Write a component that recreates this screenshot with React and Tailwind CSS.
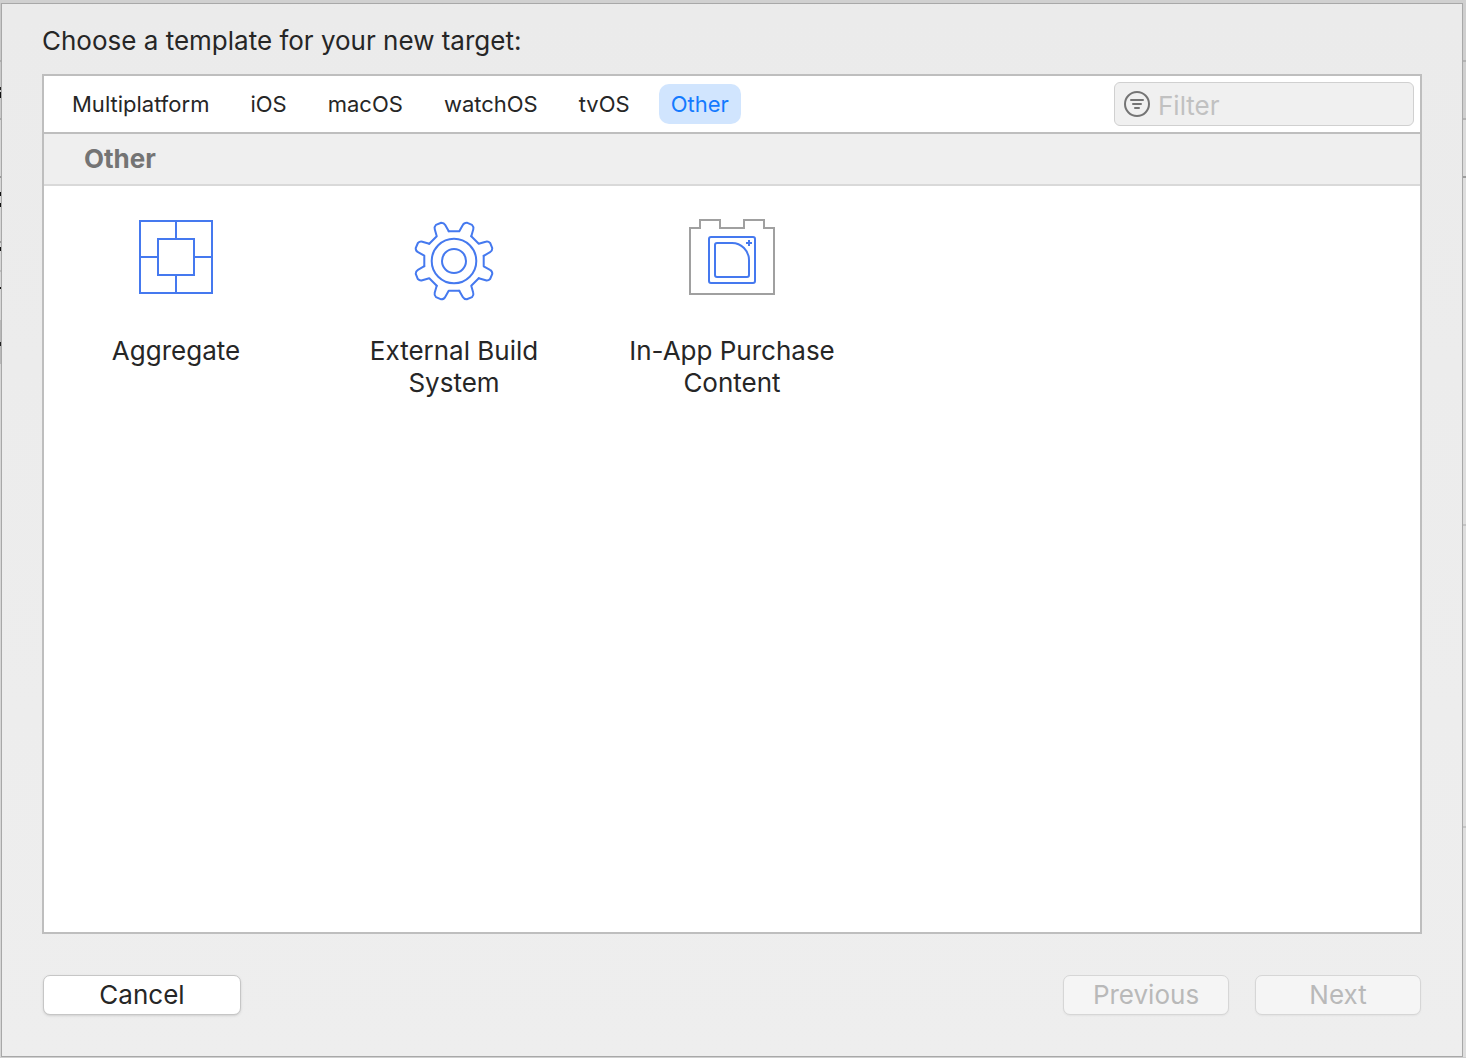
import React from "react";

const gearSegment =
  "M-5.3 -29.7H5.3L8.8 -36Q10 -38.3 12.8 -38.3L18 -36.1Q20 -34.1 19.3 -31.7L17.3 -24.7";

function AggregateIcon() {
  return (
    <svg width="88" height="88" viewBox="0 0 88 88" fill="none" stroke="#4579ef" strokeWidth="2" aria-hidden="true">
      <path d="M8 8H80V80H8ZM26 26H62V62H26ZM44 8V26M44 62V80M8 44H26M62 44H80" />
    </svg>
  );
}

function GearIcon() {
  return (
    <svg width="88" height="88" viewBox="0 0 88 88" fill="none" stroke="#4579ef" strokeWidth="2" aria-hidden="true">
      <g transform="translate(44 48)" strokeLinecap="round" strokeLinejoin="round">
        {[0, 45, 90, 135, 180, 225, 270, 315].map((a) => (
          <path key={a} d={gearSegment} transform={`rotate(${a})`} />
        ))}
        <circle r="22.3" />
        <circle r="12" />
      </g>
    </svg>
  );
}

function PurchaseIcon() {
  return (
    <svg width="88" height="88" viewBox="0 0 88 88" fill="none" strokeWidth="2" aria-hidden="true">
      <path stroke="#a0a0a0" d="M2 15H12V7H32V15H56V7H76V15H86V81H2Z" />
      <g stroke="#4579ef">
        <rect x="21" y="24" width="46" height="46" rx="2" />
        <path d="M29 30H44Q51 30 56 35T61 47V62Q61 64 59 64H29Q27 64 27 62V32Q27 30 29 30Z" />
        <path d="M61 27V33M58 30H64" />
      </g>
    </svg>
  );
}

function FilterIcon() {
  return (
    <svg className="shrink-0" width="26" height="26" viewBox="0 0 26 26" fill="none" stroke="#747474" strokeWidth="2" strokeLinecap="round" aria-hidden="true">
      <circle cx="13" cy="13" r="12" />
      <path d="M7 9H19M9 13H17M11 17H15" />
    </svg>
  );
}

// Slivers of the window behind the sheet: [height, colour]
const leftSliver = [
  [57, "#c9c9c9"], [2, "#adadad"], [25, "#c9c9c9"], [3, "#222222"], [2, "#c9c9c9"], [6, "#111111"],
  [20, "#c9c9c9"], [2, "#a9a9a9"], [56, "#d6d6d6"], [2, "#999999"], [14, "#d6d6d6"], [4, "#111111"],
  [7, "#d6d6d6"], [4, "#111111"], [34, "#d6d6d6"], [2, "#999999"], [4, "#d6d6d6"], [4, "#111111"],
  [19, "#d6d6d6"], [2, "#bbbbbb"], [15, "#d6d6d6"], [2, "#111111"], [31, "#d6d6d6"], [22, "#b8b8b8"],
  [4, "#222222"], [18, "#b8b8b8"],
];
const rightSliver = [
  [57, "#cfcfcf"], [2, "#b3b3b3"], [56, "#cfcfcf"], [2, "#b3b3b3"], [56, "#dcdcdc"], [2, "#9c9c9c"],
  [346, "#dedede"], [2, "#c4c4c4"], [300, "#dedede"], [2, "#c4c4c4"],
];

function Sliver({ parts, className }) {
  return (
    <div className={className} aria-hidden="true">
      {parts.map(([height, background], i) => (
        <div key={i} style={{ height, background }} />
      ))}
    </div>
  );
}

const tabs = ["Multiplatform", "iOS", "macOS", "watchOS", "tvOS", "Other"];

const templates = [
  { name: "Aggregate", Icon: AggregateIcon },
  { name: "External Build System", Icon: GearIcon },
  { name: "In-App Purchase Content", Icon: PurchaseIcon },
];

export default function App() {
  return (
    <div className="flex min-h-screen bg-[#d0d0d0] pt-[3px] pb-px font-['Inter',sans-serif] text-[#262626]">
      <Sliver parts={leftSliver} className="w-px bg-[#d6d6d6]" />
      <main className="flex min-w-0 grow flex-col border border-[#a8a8a8] bg-linear-to-b from-[#ebebeb] to-[#eeeeee] px-10 pb-[41px]">
        <h1 className="pt-5 text-[26px] leading-[34px]">Choose a template for your new target:</h1>
        <section className="mt-4 flex grow flex-col border-2 border-[#bebebe] bg-white">
          <div className="flex h-[58px] items-center border-b-2 border-[#bebebe] pr-1.5 pl-4">
            <nav className="flex gap-[17px]">
              {tabs.map((t) => (
                <button
                  key={t}
                  type="button"
                  className={
                    t === "Other"
                      ? "h-10 rounded-[10px] bg-[#d1e5fe] px-3 text-[22px] text-[#147aff]"
                      : "h-10 px-3 text-[22px]"
                  }
                >
                  {t}
                </button>
              ))}
            </nav>
            <label className="ml-auto flex h-11 w-[300px] items-center gap-2 rounded-md border border-[#d0d0d0] bg-[#f0f0f0] px-[9px]">
              <FilterIcon />
              <input
                type="text"
                aria-label="Filter"
                placeholder="Filter"
                className="h-10 min-w-0 grow bg-transparent pt-0.5 text-[26px] outline-none placeholder:text-[#c1c1c1]"
              />
            </label>
          </div>
          <h2 className="h-[52px] border-b-2 border-[#d9d9d9] bg-[#efefef] pl-10 text-[26px] leading-[50px] font-bold text-[#747474]">
            Other
          </h2>
          <div className="flex gap-12 px-[17px] pt-[27px]">
            {templates.map(({ name, Icon }) => (
              <button key={name} type="button" className="flex w-[230px] flex-col items-center text-[26px] leading-8">
                <Icon />
                <span className="mt-[34px]">{name}</span>
              </button>
            ))}
          </div>
        </section>
        <footer className="mt-[41px] flex gap-[26px] px-px">
          <button type="button" className="mr-auto h-10 w-[198px] rounded-[7px] border border-[#c6c6c6] bg-white text-[26px] leading-8 shadow-sm">
            Cancel
          </button>
          <button type="button" disabled className="h-10 w-[166px] rounded-[7px] border border-[#d6d6d6] bg-[#f5f5f5] text-[26px] leading-8 text-[#b9b9b9] shadow-xs">
            Previous
          </button>
          <button type="button" disabled className="h-10 w-[166px] rounded-[7px] border border-[#d6d6d6] bg-[#f5f5f5] text-[26px] leading-8 text-[#b9b9b9] shadow-xs">
            Next
          </button>
        </footer>
      </main>
      <Sliver parts={rightSliver} className="w-[3px] bg-[#dedede]" />
    </div>
  );
}
